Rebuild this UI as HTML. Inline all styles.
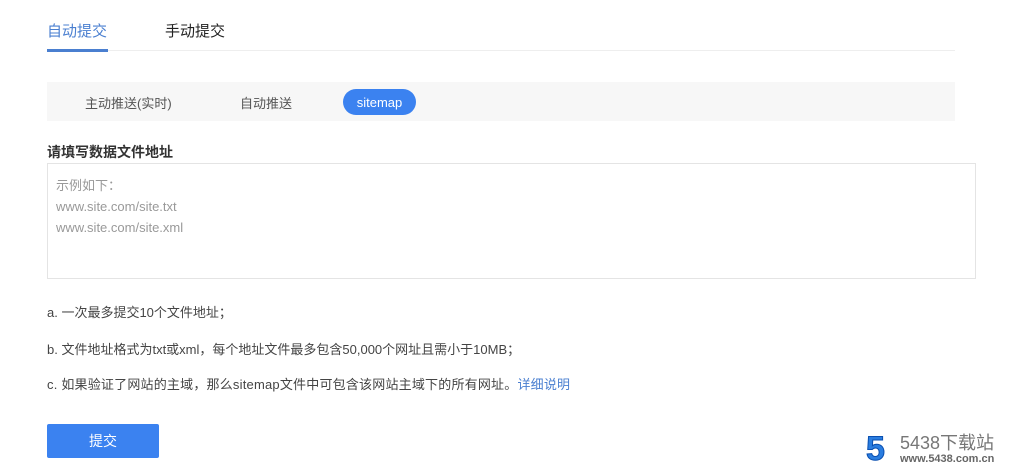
<!DOCTYPE html>
<html><head><meta charset="utf-8"><style>
body{margin:0;width:1024px;height:476px;background:#fff;font-family:"Liberation Sans","Noto Sans CJK SC",sans-serif;position:relative;overflow:hidden;color:#333}
.a{position:absolute;white-space:nowrap}
</style></head><body>
<div class="a" style="left:47px;top:20px;font-size:15px;color:#4a7fd0">自动提交</div>
<div class="a" style="left:165px;top:20px;font-size:15px;color:#222">手动提交</div>
<div class="a" style="left:47px;top:50px;width:908px;height:1px;background:#eee"></div>
<div class="a" style="left:47px;top:49px;width:61px;height:3px;background:#4a7fd0"></div>
<div class="a" style="left:47px;top:82px;width:908px;height:39px;background:#f7f7f7"></div>
<div class="a" style="left:85px;top:93px;font-size:13px;color:#555">主动推送(实时)</div>
<div class="a" style="left:240px;top:93px;font-size:13px;color:#555">自动推送</div>
<div class="a" style="left:343px;top:89px;width:73px;height:26px;border-radius:13px;background:#3b82f0;color:#fff;font-size:13px;text-align:center;line-height:27px">sitemap</div>
<div class="a" style="left:47px;top:142px;font-size:14px;font-weight:bold;color:#333">请填写数据文件地址</div>
<div class="a" style="left:47px;top:163px;width:927px;height:114px;border:1px solid #e4e4e4"></div>
<div class="a" style="left:56px;top:175px;font-size:13px;color:#999;line-height:21px">示例如下：<br>www.site.com/site.txt<br>www.site.com/site.xml</div>
<div class="a" style="left:47px;top:302px;font-size:13px;color:#444">a. 一次最多提交10个文件地址；</div>
<div class="a" style="left:47px;top:339px;font-size:13px;color:#444">b. 文件地址格式为txt或xml，每个地址文件最多包含50,000个网址且需小于10MB；</div>
<div class="a" style="left:47px;top:374px;font-size:13px;color:#444;letter-spacing:0.2px">c. 如果验证了网站的主域，那么sitemap文件中可包含该网站主域下的所有网址。<span style="color:#4a7fd0">详细说明</span></div>
<div class="a" style="left:47px;top:424px;width:112px;height:34px;border-radius:2px;background:#3b82f0;color:#fff;font-size:14px;text-align:center;line-height:34px">提交</div>
<div class="a" style="left:866px;top:432px;font-size:34px;font-weight:bold;color:#2a7de0;line-height:34px;-webkit-text-stroke:1px #0a4fb0">5</div>
<div class="a" style="left:900px;top:433px;font-size:18px;color:#777;line-height:20px">5438下载站</div>
<div class="a" style="left:900px;top:453px;font-size:11px;font-weight:bold;color:#666">www.5438.com.cn</div>
</body></html>
